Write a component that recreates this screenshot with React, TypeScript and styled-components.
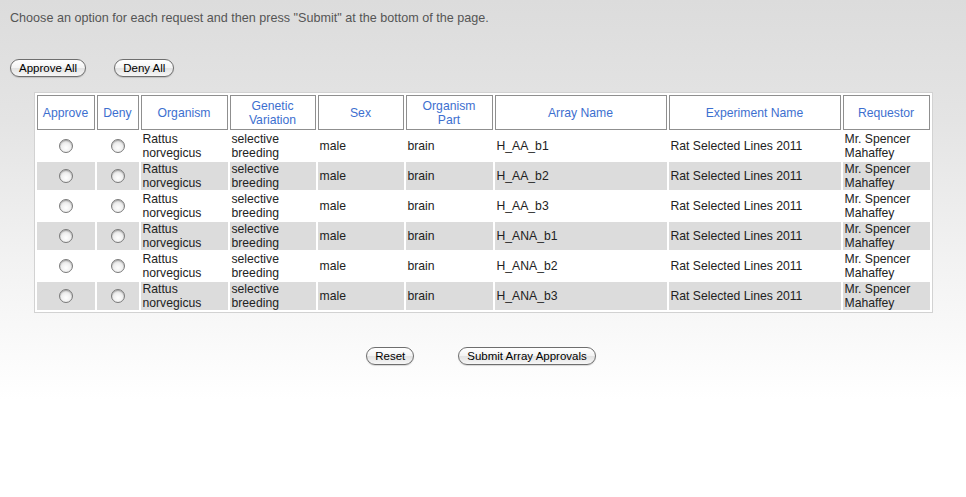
import React from "react";
import styled, { createGlobalStyle } from "styled-components";

const Global = createGlobalStyle`
  html, body { margin: 0; padding: 0; }
  body {
    background: linear-gradient(to bottom, #dcdcdc 0px, #e4e4e4 120px, #f2f2f2 260px, #ffffff 400px);
    min-height: 497px;
    font-family: "Liberation Sans", Arial, sans-serif;
  }
`;

const Page = styled.div`
  width: 966px;
  min-height: 497px;
  padding-top: 10px;
  box-sizing: border-box;
`;

const Intro = styled.p`
  margin: 0 0 0 10px;
  font-size: 12.6px;
  line-height: 17px;
  color: #555;
`;

const TopBar = styled.div`
  display: flex;
  gap: 28px;
  margin: 32px 0 0 10px;
`;

const PillButton = styled.button`
  height: 18px;
  padding: 0 8px;
  font-family: "Liberation Sans", Arial, sans-serif;
  font-size: 11.5px;
  color: #000;
  border: 1px solid #6e6e6e;
  border-radius: 9px;
  background: linear-gradient(to bottom, #ffffff 0%, #f3f3f3 50%, #e2e2e2 51%, #f6f6f6 100%);
  box-shadow: 0 1px 1px rgba(0, 0, 0, 0.15);
  line-height: 16px;
  cursor: pointer;
`;

const TableWrap = styled.div`
  display: flex;
  justify-content: center;
  margin-top: 15px;
`;

const Table = styled.table`
  width: 898px;
  border: 1px solid #d2d2d2;
  border-collapse: separate;
  border-spacing: 2px;
  background: #fff;
  font-size: 12.2px;
  table-layout: fixed;
`;

const Th = styled.th<{ $w: number }>`
  width: ${(p) => p.$w}px;
  height: 35px;
  border: 1px solid #8f8f8f;
  padding: 0 2px;
  box-sizing: border-box;
  font-weight: normal;
  color: #3d6fcf;
  line-height: 14px;
  text-align: center;
  vertical-align: middle;
`;

const Tr = styled.tr<{ $alt: boolean }>`
  background: ${(p) => (p.$alt ? "#dcdcdc" : "#ffffff")};
`;

const Td = styled.td<{ $center?: boolean }>`
  height: 28px;
  padding: 0 2px;
  color: #222;
  line-height: 14px;
  vertical-align: middle;
  text-align: ${(p) => (p.$center ? "center" : "left")};
`;

const Radio = styled.span`
  display: inline-block;
  width: 12px;
  height: 12px;
  border-radius: 50%;
  border: 1px solid #7a7a7a;
  background: radial-gradient(circle at 50% 65%, #ffffff 0%, #f0f0f0 45%, #c8c8c8 100%);
  box-shadow: inset 0 1px 1px rgba(0, 0, 0, 0.25);
  vertical-align: middle;
`;

const BottomBar = styled.div`
  display: flex;
  justify-content: center;
  gap: 44px;
  margin-top: 34px;
  padding-right: 4px;
`;

const columns: [string, number][] = [
  ["Approve", 58],
  ["Deny", 42],
  ["Organism", 87],
  ["Genetic Variation", 86],
  ["Sex", 86],
  ["Organism Part", 87],
  ["Array Name", 172],
  ["Experiment Name", 172],
  ["Requestor", 87],
];

const arrays = ["H_AA_b1", "H_AA_b2", "H_AA_b3", "H_ANA_b1", "H_ANA_b2", "H_ANA_b3"];

export default function App() {
  return (
    <Page>
      <Global />
      <Intro>Choose an option for each request and then press "Submit" at the bottom of the page.</Intro>
      <TopBar>
        <PillButton>Approve All</PillButton>
        <PillButton>Deny All</PillButton>
      </TopBar>
      <TableWrap>
        <Table>
          <thead>
            <tr>
              {columns.map(([label, w]) =>
                <Th key={label} $w={w}>
                  {label === "Genetic Variation" ? <>Genetic<br />Variation</> : label === "Organism Part" ? <>Organism<br />Part</> : label}
                </Th>
              )}
            </tr>
          </thead>
          <tbody>
            {arrays.map((a, i) => (
              <Tr key={a} $alt={i % 2 === 1}>
                <Td $center><Radio /></Td>
                <Td $center><Radio /></Td>
                <Td>Rattus<br />norvegicus</Td>
                <Td>selective<br />breeding</Td>
                <Td>male</Td>
                <Td>brain</Td>
                <Td>{a}</Td>
                <Td>Rat Selected Lines 2011</Td>
                <Td>Mr. Spencer<br />Mahaffey</Td>
              </Tr>
            ))}
          </tbody>
        </Table>
      </TableWrap>
      <BottomBar>
        <PillButton>Reset</PillButton>
        <PillButton>Submit Array Approvals</PillButton>
      </BottomBar>
    </Page>
  );
}
